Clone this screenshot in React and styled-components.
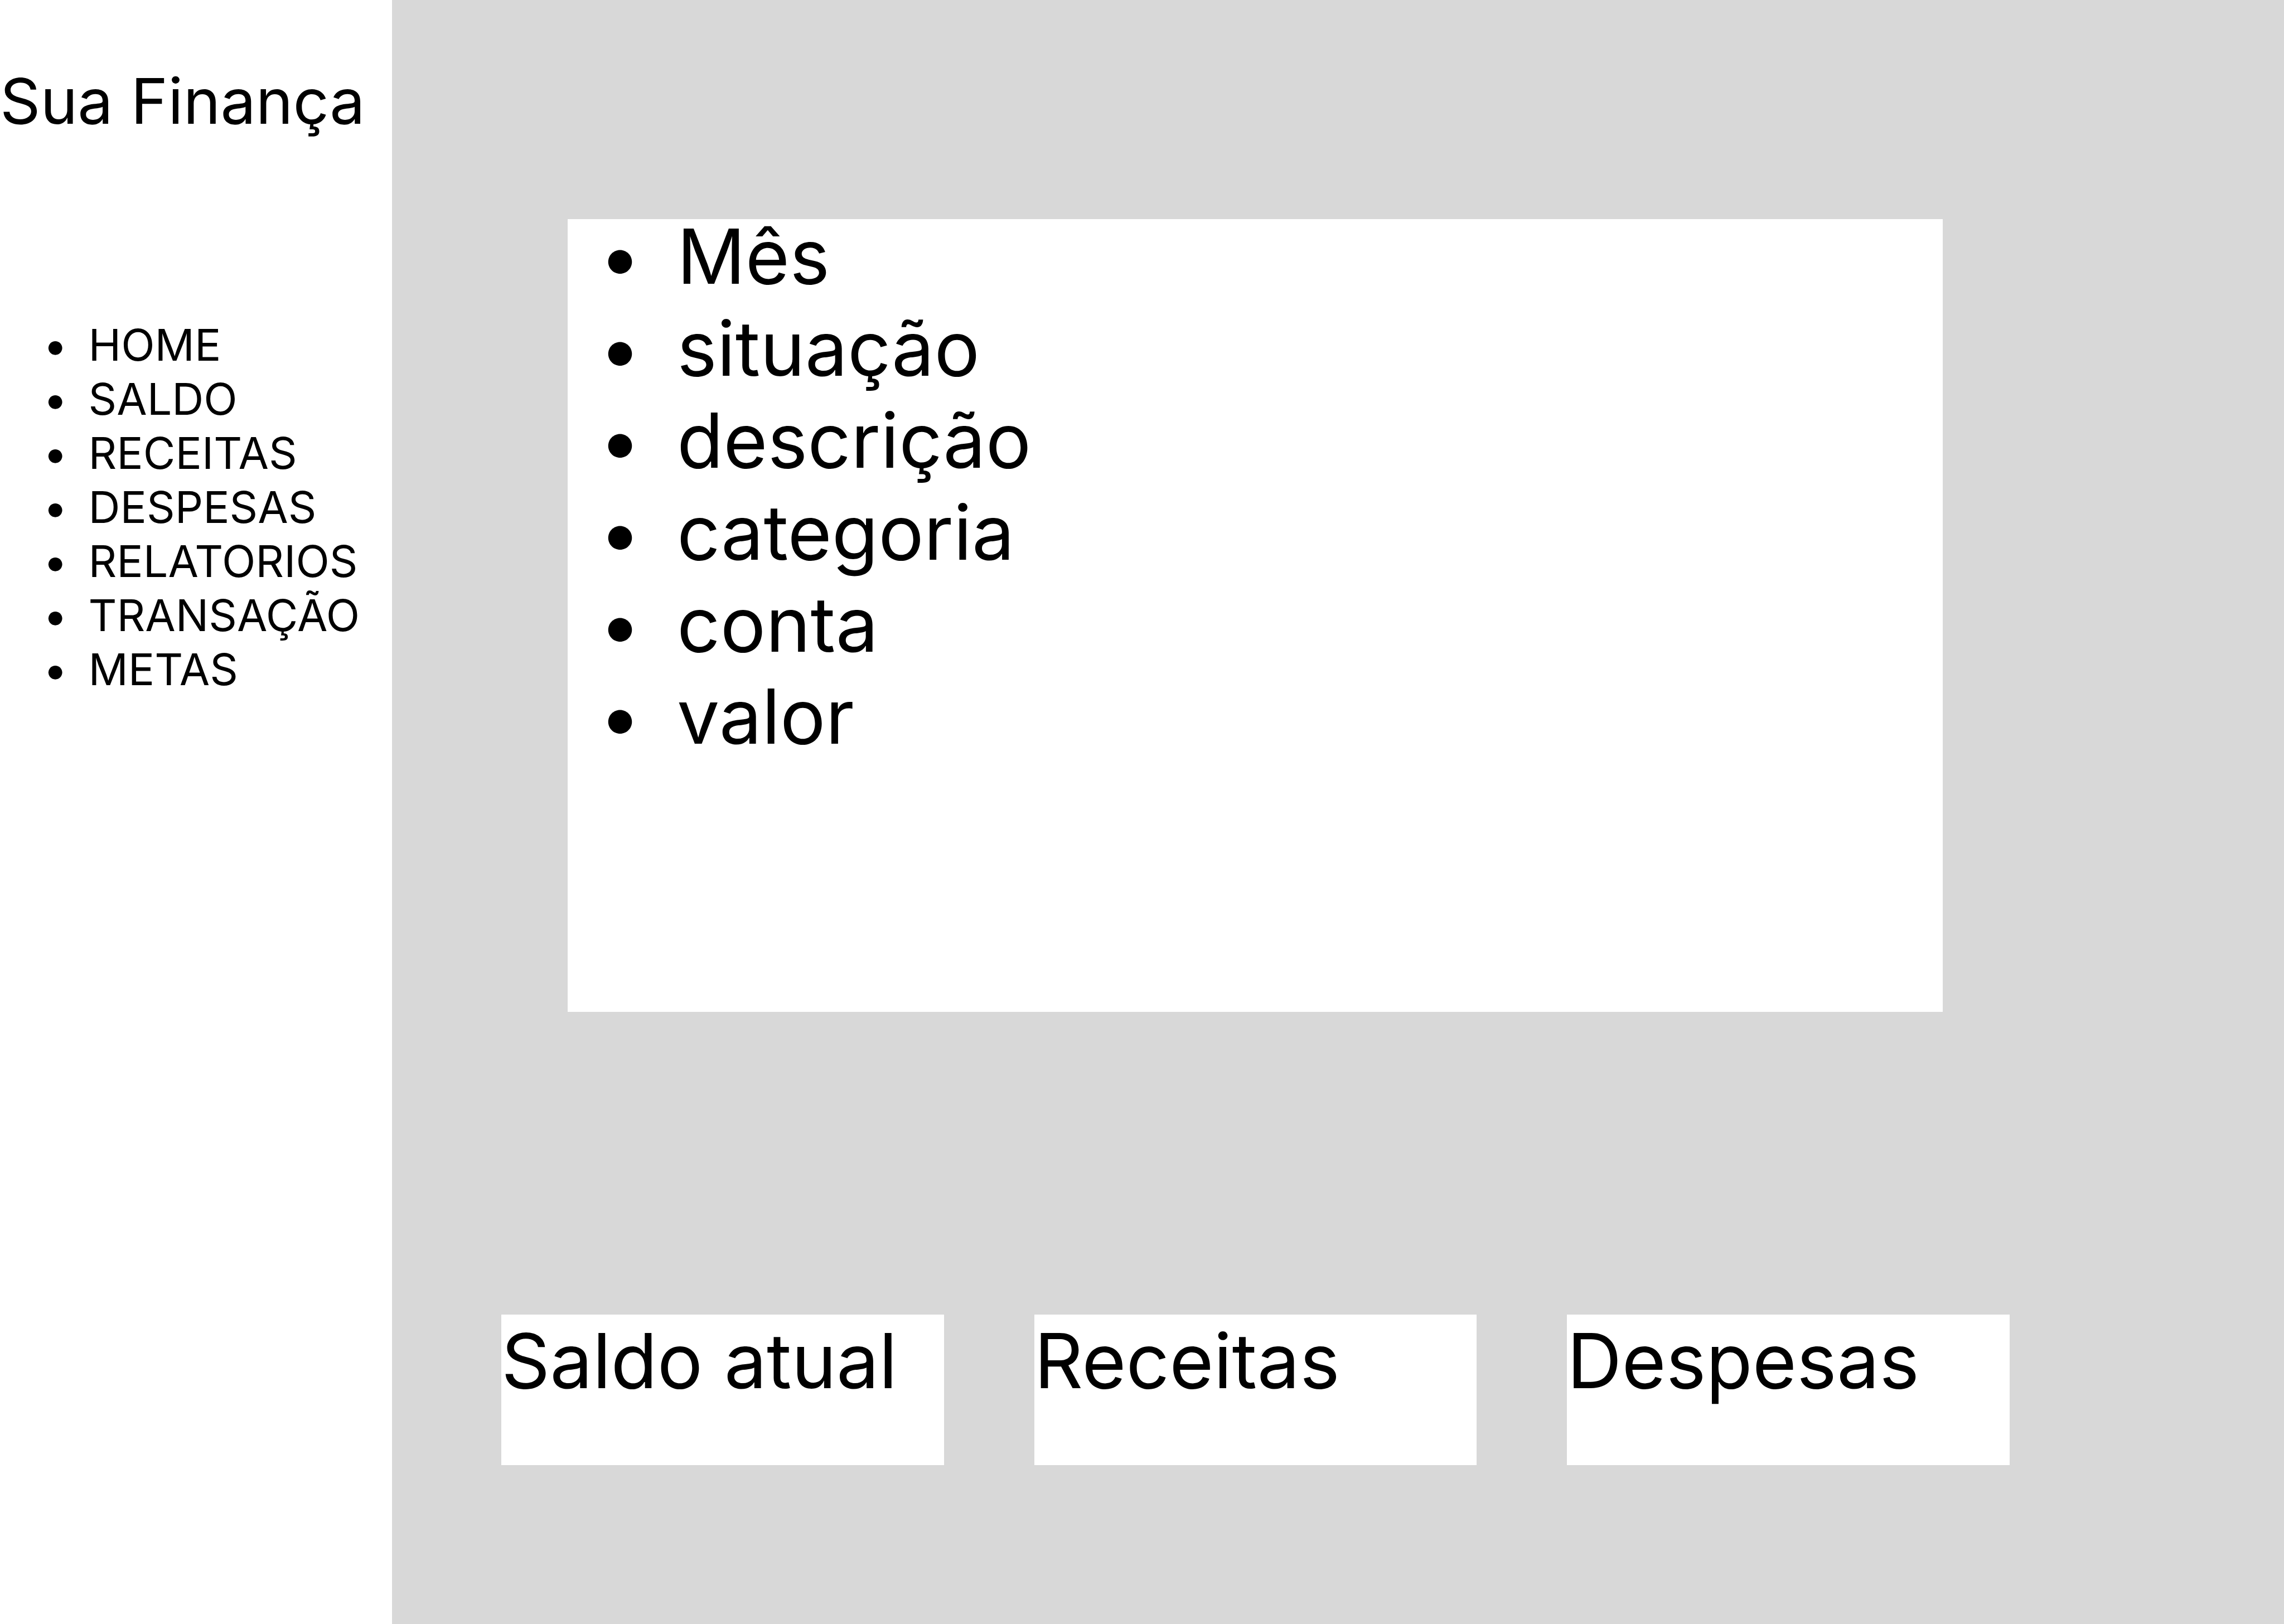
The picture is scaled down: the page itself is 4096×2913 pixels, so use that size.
import React from "react";
import styled, { createGlobalStyle } from "styled-components";

const GlobalStyle = createGlobalStyle`
  *, *::before { box-sizing: border-box; }
  body {
    margin: 0;
    background: #d8d8d8;
    color: #000;
    font-family: Inter, "Liberation Sans", sans-serif;
    font-weight: 400;
  }
`;

const Page = styled.div`
  display: flex;
  min-height: 100vh;
`;

const Sidebar = styled.aside`
  flex: 0 0 703px;
  padding-top: 112px;
  background: #fff;
`;

const Brand = styled.h1`
  margin: 0 0 320px;
  font-size: 113px;
  font-weight: 400;
  line-height: 138px;
  white-space: nowrap;
`;

const List = styled.ul`
  margin: 0;
  padding: 0;
  list-style: none;
`;

const MenuList = styled(List)`
  padding-left: 40px;
  font-size: 79px;
  line-height: 97px;
`;

const FieldList = styled(List)`
  margin: -16px 0 0 -8px;
  font-size: 136px;
  line-height: 165px;
`;

const Item = styled.li`
  display: flex;

  &::before {
    content: "•";
    flex: 0 0 1.5em;
    text-align: center;
  }
`;

const MenuLink = styled.a`
  color: inherit;
  text-decoration: none;
`;

const Main = styled.main`
  flex: 1;
  min-width: 0;
  padding-top: 393px;
`;

const Panel = styled.section`
  display: flow-root;
  min-height: 1422px;
  margin: 0 612px 543px 315px;
  background: #fff;
`;

const Cards = styled.section`
  display: grid;
  grid-template-columns: repeat(3, 1fr);
  gap: 162px;
  margin: 0 492px 0 196px;
`;

const Card = styled.article`
  min-height: 270px;
  background: #fff;
`;

const CardTitle = styled.h2`
  margin: 0;
  font-size: 136px;
  font-weight: 400;
  line-height: 165px;
  white-space: nowrap;
`;

const menu = ["HOME", "SALDO", "RECEITAS", "DESPESAS", "RELATORIOS", "TRANSAÇÃO", "METAS"];
const fields = ["Mês", "situação", "descrição", "categoria", "conta", "valor"];
const cards = ["Saldo atual", "Receitas", "Despesas"];

export default function App() {
  return (
    <>
      <GlobalStyle />
      <Page>
        <Sidebar>
          <Brand>Sua Finança</Brand>
          <nav>
            <MenuList>
              {menu.map((label) => (
                <Item key={label}>
                  <MenuLink href={"#" + label.toLowerCase()}>{label}</MenuLink>
                </Item>
              ))}
            </MenuList>
          </nav>
        </Sidebar>
        <Main>
          <Panel>
            <FieldList>
              {fields.map((label) => (
                <Item key={label}>{label}</Item>
              ))}
            </FieldList>
          </Panel>
          <Cards>
            {cards.map((title) => (
              <Card key={title}>
                <CardTitle>{title}</CardTitle>
              </Card>
            ))}
          </Cards>
        </Main>
      </Page>
    </>
  );
}
